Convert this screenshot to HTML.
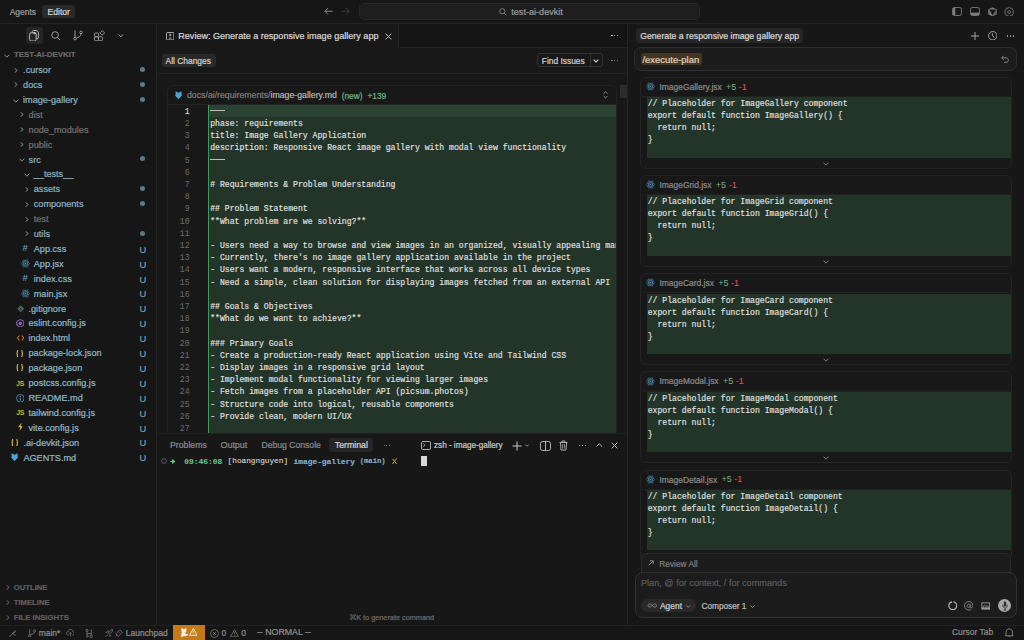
<!DOCTYPE html>
<html><head><meta charset="utf-8"><style>
html,body{margin:0;padding:0;width:1024px;height:640px;overflow:hidden;background:#181818;position:relative}
body *{box-sizing:border-box}
</style></head><body>
<div style="position:absolute;left:0px;top:0px;width:1024px;height:23px;background:#161616;border-radius:0px;box-sizing:border-box;"></div>
<div style="position:absolute;left:0px;top:23px;width:1024px;height:1px;background:#232323;border-radius:0px;box-sizing:border-box;"></div>
<div style="position:absolute;left:9.70px;top:8.25px;font-family:'Liberation Sans', sans-serif;font-weight:400;font-size:8.448px;line-height:8.448px;color:#9d9d9d;white-space:pre;-webkit-text-stroke:0.22px #9d9d9d;">Agents</div>
<div style="position:absolute;left:42px;top:5px;width:33px;height:13.3px;background:#2a2a2a;border-radius:3px;box-sizing:border-box;"></div>
<div style="position:absolute;left:47.50px;top:8.11px;font-family:'Liberation Sans', sans-serif;font-weight:400;font-size:8.613px;line-height:8.613px;color:#d6d6d6;white-space:pre;-webkit-text-stroke:0.22px #d6d6d6;">Editor</div>
<svg style="position:absolute;left:323.5px;top:7.3px;" width="9" height="8.5" viewBox="0 0 9 8.5" fill="none"><path d="M8.6 4.25H0.9M4.1 1L0.9 4.25L4.1 7.5" stroke="#8e8e8e" stroke-width="0.95"/></svg>
<svg style="position:absolute;left:341px;top:7.3px;" width="9" height="8.5" viewBox="0 0 9 8.5" fill="none"><path d="M0.4 4.25H8.1M4.9 1L8.1 4.25L4.9 7.5" stroke="#3c3c3c" stroke-width="0.95"/></svg>
<div style="position:absolute;left:359px;top:3px;width:340.5px;height:16.7px;background:#1e1e1e;border:1px solid #272727;border-radius:5px;box-sizing:border-box;"></div>
<svg style="position:absolute;left:498.8px;top:8.3px;" width="8" height="8" viewBox="0 0 8 8" fill="none"><circle cx="3.3" cy="3.3" r="2.6" stroke="#858585" stroke-width="0.9"/><path d="M5.2 5.2L7.4 7.4" stroke="#858585" stroke-width="0.9"/></svg>
<div style="position:absolute;left:511.25px;top:7.97px;font-family:'Liberation Sans', sans-serif;font-weight:400;font-size:9.129px;line-height:9.129px;color:#9a9a9a;white-space:pre;-webkit-text-stroke:0.22px #9a9a9a;">test-ai-devkit</div>
<svg style="position:absolute;left:952px;top:7px;" width="10" height="9" viewBox="0 0 10 9" fill="none"><rect x="0.5" y="0.5" width="9" height="8" rx="1.8" stroke="#7c7c7c" stroke-width="0.9"/><rect x="0.9" y="0.9" width="2.4" height="7.2" fill="#7c7c7c"/></svg>
<svg style="position:absolute;left:969.8px;top:7px;" width="10" height="9" viewBox="0 0 10 9" fill="none"><rect x="0.5" y="0.5" width="9" height="8" rx="1.8" stroke="#7c7c7c" stroke-width="0.9"/><rect x="0.9" y="5.6" width="8.2" height="2.5" fill="#7c7c7c"/></svg>
<svg style="position:absolute;left:988px;top:6.7px;" width="9" height="9.6" viewBox="0 0 9 9.6" fill="none"><path d="M4.5 0.2L8.8 2.6V7.2L4.5 9.5L0.2 7.2V2.6Z" fill="#7c7c7c"/><path d="M1.2 2.6H8.3L4.5 8.2Z" fill="#161616"/><path d="M8.3 2.6L4.5 8.2V9.4L8.8 7.1V2.6Z" fill="#5c5c5c"/></svg>
<svg style="position:absolute;left:1003.8px;top:6.6px;" width="10.4" height="9.8" viewBox="0 0 10.4 9.8" fill="none"><path d="M5.2 0.7L6.4 1.8L8 1.6L8.3 3.2L9.7 4.1L9.1 5.6L9.7 7L8.3 7.9L8 9.4L6.4 9.2L5.2 10.2L4 9.2L2.4 9.4L2.1 7.9L0.7 7L1.3 5.6L0.7 4.1L2.1 3.2L2.4 1.6L4 1.8Z" stroke="#7c7c7c" stroke-width="0.85" stroke-linejoin="round" transform="translate(0 -0.5)"/><circle cx="5.2" cy="5.1" r="1.5" stroke="#7c7c7c" stroke-width="0.85"/></svg>
<div style="position:absolute;left:0px;top:24px;width:156px;height:601px;background:#161616;border-radius:0px;box-sizing:border-box;"></div>
<div style="position:absolute;left:156px;top:24px;width:1px;height:601px;background:#232323;border-radius:0px;box-sizing:border-box;"></div>
<div style="position:absolute;left:25.5px;top:26.7px;width:17.299999999999997px;height:17.3px;background:#262626;border-radius:3px;box-sizing:border-box;"></div>
<svg style="position:absolute;left:29.3px;top:29.8px;" width="10" height="11.5" viewBox="0 0 10 11.5" fill="none"><path d="M3.2 2.6V2C3.2 1.2 3.8 0.5 4.6 0.5H7C8.3 0.5 9.4 1.6 9.4 2.9V7.4C9.4 8.2 8.8 8.8 8 8.8H7.2" stroke="#cdcdcd" stroke-width="0.85"/><rect x="0.6" y="2.8" width="6.6" height="8.2" rx="1.6" stroke="#cdcdcd" stroke-width="0.85"/><circle cx="5.6" cy="3.2" r="1.1" fill="#cdcdcd"/></svg>
<svg style="position:absolute;left:50.8px;top:31px;" width="10" height="10" viewBox="0 0 10 10" fill="none"><circle cx="4.1" cy="4" r="3.3" stroke="#a8a8a8" stroke-width="0.9"/><path d="M6.5 6.4L9.2 9.1" stroke="#a8a8a8" stroke-width="0.95"/></svg>
<svg style="position:absolute;left:72.8px;top:30.4px;" width="10" height="10.6" viewBox="0 0 10 10.6" fill="none"><path d="M2 0.3V7.6" stroke="#a8a8a8" stroke-width="0.9"/><circle cx="2" cy="8.6" r="1.3" stroke="#a8a8a8" stroke-width="0.85"/><circle cx="8" cy="2.4" r="1.3" stroke="#a8a8a8" stroke-width="0.85"/><path d="M8 3.7C8 6.5 5.5 7.3 3.2 8.2" stroke="#a8a8a8" stroke-width="0.9"/></svg>
<svg style="position:absolute;left:93.6px;top:29.8px;" width="11.4" height="11.2" viewBox="0 0 11.4 11.2" fill="none"><rect x="0.5" y="3.1" width="4" height="3.7" rx="0.9" stroke="#a8a8a8" stroke-width="0.85"/><rect x="0.5" y="6.8" width="4" height="3.9" rx="0.9" stroke="#a8a8a8" stroke-width="0.85"/><rect x="4.5" y="6.8" width="4" height="3.9" rx="0.9" stroke="#a8a8a8" stroke-width="0.85"/><path d="M8.3 0.6L10.6 2.9L8.3 5.2L6 2.9Z" stroke="#a8a8a8" stroke-width="0.85" stroke-linejoin="round"/></svg>
<svg style="position:absolute;left:118px;top:34px;" width="6" height="3.5" viewBox="0 0 6 3.5" fill="none"><path d="M0.4 0.4L2.9 2.8L5.4 0.4" stroke="#a0a0a0" stroke-width="0.9"/></svg>
<svg style="position:absolute;left:4px;top:53.5px;" width="6" height="4" viewBox="0 0 6 4" fill="none"><path d="M0.4 0.6L2.9 3.2L5.4 0.6" stroke="#8e8e8e" stroke-width="1"/></svg>
<div style="position:absolute;left:14.00px;top:51.34px;font-family:'Liberation Sans', sans-serif;font-weight:700;font-size:7.864px;line-height:7.864px;color:#6a6a6a;white-space:pre;-webkit-text-stroke:0.22px #6a6a6a;">TEST-AI-DEVKIT</div>
<svg style="position:absolute;left:14px;top:67.5px;" width="4" height="5" viewBox="0 0 4 5" fill="none"><path d="M0.6 0.4L3.2 2.5L0.6 4.6" stroke="#8e8e8e" stroke-width="1"/></svg>
<div style="position:absolute;left:23.10px;top:66.15px;font-family:'Liberation Sans', sans-serif;font-weight:400;font-size:9.150px;line-height:9.150px;color:#86b3c4;white-space:pre;-webkit-text-stroke:0.22px #86b3c4;">.cursor</div>
<div style="position:absolute;left:139.8px;top:66.9px;width:5px;height:5px;border-radius:50%;background:#5d7884"></div>
<svg style="position:absolute;left:14px;top:82.4px;" width="4" height="5" viewBox="0 0 4 5" fill="none"><path d="M0.6 0.4L3.2 2.5L0.6 4.6" stroke="#8e8e8e" stroke-width="1"/></svg>
<div style="position:absolute;left:23.10px;top:81.05px;font-family:'Liberation Sans', sans-serif;font-weight:400;font-size:9.150px;line-height:9.150px;color:#86b3c4;white-space:pre;-webkit-text-stroke:0.22px #86b3c4;">docs</div>
<div style="position:absolute;left:139.8px;top:81.80000000000001px;width:5px;height:5px;border-radius:50%;background:#5d7884"></div>
<svg style="position:absolute;left:13px;top:98.6px;" width="6" height="4" viewBox="0 0 6 4" fill="none"><path d="M0.4 0.6L2.9 3.2L5.4 0.6" stroke="#8e8e8e" stroke-width="1"/></svg>
<div style="position:absolute;left:23.10px;top:95.95px;font-family:'Liberation Sans', sans-serif;font-weight:400;font-size:9.150px;line-height:9.150px;color:#86b3c4;white-space:pre;-webkit-text-stroke:0.22px #86b3c4;">image-gallery</div>
<div style="position:absolute;left:139.8px;top:96.7px;width:5px;height:5px;border-radius:50%;background:#5d7884"></div>
<svg style="position:absolute;left:20px;top:112.2px;" width="4" height="5" viewBox="0 0 4 5" fill="none"><path d="M0.6 0.4L3.2 2.5L0.6 4.6" stroke="#8e8e8e" stroke-width="1"/></svg>
<div style="position:absolute;left:28.60px;top:110.85px;font-family:'Liberation Sans', sans-serif;font-weight:400;font-size:9.150px;line-height:9.150px;color:#727272;white-space:pre;-webkit-text-stroke:0.22px #727272;">dist</div>
<svg style="position:absolute;left:20px;top:127.1px;" width="4" height="5" viewBox="0 0 4 5" fill="none"><path d="M0.6 0.4L3.2 2.5L0.6 4.6" stroke="#8e8e8e" stroke-width="1"/></svg>
<div style="position:absolute;left:28.60px;top:125.75px;font-family:'Liberation Sans', sans-serif;font-weight:400;font-size:9.150px;line-height:9.150px;color:#727272;white-space:pre;-webkit-text-stroke:0.22px #727272;">node_modules</div>
<svg style="position:absolute;left:20px;top:142.0px;" width="4" height="5" viewBox="0 0 4 5" fill="none"><path d="M0.6 0.4L3.2 2.5L0.6 4.6" stroke="#8e8e8e" stroke-width="1"/></svg>
<div style="position:absolute;left:28.60px;top:140.65px;font-family:'Liberation Sans', sans-serif;font-weight:400;font-size:9.150px;line-height:9.150px;color:#727272;white-space:pre;-webkit-text-stroke:0.22px #727272;">public</div>
<svg style="position:absolute;left:18.7px;top:158.20000000000002px;" width="6" height="4" viewBox="0 0 6 4" fill="none"><path d="M0.4 0.6L2.9 3.2L5.4 0.6" stroke="#8e8e8e" stroke-width="1"/></svg>
<div style="position:absolute;left:28.60px;top:155.55px;font-family:'Liberation Sans', sans-serif;font-weight:400;font-size:9.150px;line-height:9.150px;color:#86b3c4;white-space:pre;-webkit-text-stroke:0.22px #86b3c4;">src</div>
<div style="position:absolute;left:139.8px;top:156.3px;width:5px;height:5px;border-radius:50%;background:#5d7884"></div>
<svg style="position:absolute;left:23.7px;top:173.10000000000002px;" width="6" height="4" viewBox="0 0 6 4" fill="none"><path d="M0.4 0.6L2.9 3.2L5.4 0.6" stroke="#8e8e8e" stroke-width="1"/></svg>
<div style="position:absolute;left:33.75px;top:170.45px;font-family:'Liberation Sans', sans-serif;font-weight:400;font-size:9.150px;line-height:9.150px;color:#86b3c4;white-space:pre;-webkit-text-stroke:0.22px #86b3c4;">__tests__</div>
<svg style="position:absolute;left:25px;top:186.7px;" width="4" height="5" viewBox="0 0 4 5" fill="none"><path d="M0.6 0.4L3.2 2.5L0.6 4.6" stroke="#8e8e8e" stroke-width="1"/></svg>
<div style="position:absolute;left:33.75px;top:185.35px;font-family:'Liberation Sans', sans-serif;font-weight:400;font-size:9.150px;line-height:9.150px;color:#86b3c4;white-space:pre;-webkit-text-stroke:0.22px #86b3c4;">assets</div>
<div style="position:absolute;left:139.8px;top:186.1px;width:5px;height:5px;border-radius:50%;background:#5d7884"></div>
<svg style="position:absolute;left:25px;top:201.6px;" width="4" height="5" viewBox="0 0 4 5" fill="none"><path d="M0.6 0.4L3.2 2.5L0.6 4.6" stroke="#8e8e8e" stroke-width="1"/></svg>
<div style="position:absolute;left:33.75px;top:200.25px;font-family:'Liberation Sans', sans-serif;font-weight:400;font-size:9.150px;line-height:9.150px;color:#86b3c4;white-space:pre;-webkit-text-stroke:0.22px #86b3c4;">components</div>
<div style="position:absolute;left:139.8px;top:201.0px;width:5px;height:5px;border-radius:50%;background:#5d7884"></div>
<svg style="position:absolute;left:25px;top:216.5px;" width="4" height="5" viewBox="0 0 4 5" fill="none"><path d="M0.6 0.4L3.2 2.5L0.6 4.6" stroke="#8e8e8e" stroke-width="1"/></svg>
<div style="position:absolute;left:33.75px;top:215.15px;font-family:'Liberation Sans', sans-serif;font-weight:400;font-size:9.150px;line-height:9.150px;color:#727272;white-space:pre;-webkit-text-stroke:0.22px #727272;">test</div>
<svg style="position:absolute;left:25px;top:231.4px;" width="4" height="5" viewBox="0 0 4 5" fill="none"><path d="M0.6 0.4L3.2 2.5L0.6 4.6" stroke="#8e8e8e" stroke-width="1"/></svg>
<div style="position:absolute;left:33.75px;top:230.05px;font-family:'Liberation Sans', sans-serif;font-weight:400;font-size:9.150px;line-height:9.150px;color:#86b3c4;white-space:pre;-webkit-text-stroke:0.22px #86b3c4;">utils</div>
<div style="position:absolute;left:139.8px;top:230.8px;width:5px;height:5px;border-radius:50%;background:#5d7884"></div>
<div style="position:absolute;left:20.6px;top:243.20000000000002px;width:9px;height:10px;font:700 9.6px 'Liberation Sans', sans-serif;color:#4a9cc8;line-height:10px;text-align:center">#</div>
<div style="position:absolute;left:33.75px;top:244.95px;font-family:'Liberation Sans', sans-serif;font-weight:400;font-size:9.150px;line-height:9.150px;color:#8fb6c6;white-space:pre;-webkit-text-stroke:0.22px #8fb6c6;">App.css</div>
<div style="position:absolute;left:139.60px;top:244.74px;font-family:'Liberation Sans', sans-serif;font-weight:400;font-size:9.400px;line-height:9.400px;color:#76a0b1;white-space:pre;-webkit-text-stroke:0.22px #76a0b1;">U</div>
<svg style="position:absolute;left:20.8px;top:259.1px;" width="9" height="9" viewBox="0 0 9 9" fill="none"><g stroke="#4f91b3" stroke-width="0.55"><ellipse cx="4.5" cy="4.5" rx="4.1" ry="1.7"/><ellipse cx="4.5" cy="4.5" rx="4.1" ry="1.7" transform="rotate(60 4.5 4.5)"/><ellipse cx="4.5" cy="4.5" rx="4.1" ry="1.7" transform="rotate(120 4.5 4.5)"/></g><circle cx="4.5" cy="4.5" r="0.7" fill="#4f91b3"/></svg>
<div style="position:absolute;left:33.75px;top:259.85px;font-family:'Liberation Sans', sans-serif;font-weight:400;font-size:9.150px;line-height:9.150px;color:#8fb6c6;white-space:pre;-webkit-text-stroke:0.22px #8fb6c6;">App.jsx</div>
<div style="position:absolute;left:139.60px;top:259.64px;font-family:'Liberation Sans', sans-serif;font-weight:400;font-size:9.400px;line-height:9.400px;color:#76a0b1;white-space:pre;-webkit-text-stroke:0.22px #76a0b1;">U</div>
<div style="position:absolute;left:20.6px;top:273.0px;width:9px;height:10px;font:700 9.6px 'Liberation Sans', sans-serif;color:#4a9cc8;line-height:10px;text-align:center">#</div>
<div style="position:absolute;left:33.75px;top:274.75px;font-family:'Liberation Sans', sans-serif;font-weight:400;font-size:9.150px;line-height:9.150px;color:#8fb6c6;white-space:pre;-webkit-text-stroke:0.22px #8fb6c6;">index.css</div>
<div style="position:absolute;left:139.60px;top:274.54px;font-family:'Liberation Sans', sans-serif;font-weight:400;font-size:9.400px;line-height:9.400px;color:#76a0b1;white-space:pre;-webkit-text-stroke:0.22px #76a0b1;">U</div>
<svg style="position:absolute;left:20.8px;top:288.9px;" width="9" height="9" viewBox="0 0 9 9" fill="none"><g stroke="#4f91b3" stroke-width="0.55"><ellipse cx="4.5" cy="4.5" rx="4.1" ry="1.7"/><ellipse cx="4.5" cy="4.5" rx="4.1" ry="1.7" transform="rotate(60 4.5 4.5)"/><ellipse cx="4.5" cy="4.5" rx="4.1" ry="1.7" transform="rotate(120 4.5 4.5)"/></g><circle cx="4.5" cy="4.5" r="0.7" fill="#4f91b3"/></svg>
<div style="position:absolute;left:33.75px;top:289.65px;font-family:'Liberation Sans', sans-serif;font-weight:400;font-size:9.150px;line-height:9.150px;color:#8fb6c6;white-space:pre;-webkit-text-stroke:0.22px #8fb6c6;">main.jsx</div>
<div style="position:absolute;left:139.60px;top:289.44px;font-family:'Liberation Sans', sans-serif;font-weight:400;font-size:9.400px;line-height:9.400px;color:#76a0b1;white-space:pre;-webkit-text-stroke:0.22px #76a0b1;">U</div>
<svg style="position:absolute;left:16.5px;top:304.79999999999995px;" width="7.5" height="7.5" viewBox="0 0 7.5 7.5" fill="none"><path d="M3.75 0.2L7.3 3.75L3.75 7.3L0.2 3.75Z" fill="#4c5f63"/><path d="M2.6 2.6L4.8 4.8M3.7 3.7V5.3" stroke="#1a1a1a" stroke-width="0.6"/></svg>
<div style="position:absolute;left:28.50px;top:304.55px;font-family:'Liberation Sans', sans-serif;font-weight:400;font-size:9.150px;line-height:9.150px;color:#8fb6c6;white-space:pre;-webkit-text-stroke:0.22px #8fb6c6;">.gitignore</div>
<div style="position:absolute;left:139.60px;top:304.34px;font-family:'Liberation Sans', sans-serif;font-weight:400;font-size:9.400px;line-height:9.400px;color:#76a0b1;white-space:pre;-webkit-text-stroke:0.22px #76a0b1;">U</div>
<svg style="position:absolute;left:15.899999999999999px;top:318.90000000000003px;" width="8.6" height="8.6" viewBox="0 0 8.6 8.6" fill="none"><path d="M4.3 0.5L7.8 2.4V6.2L4.3 8.1L0.8 6.2V2.4Z" stroke="#9b6bd0" stroke-width="1"/><circle cx="4.3" cy="4.3" r="1.6" fill="#9b6bd0"/></svg>
<div style="position:absolute;left:28.50px;top:319.45px;font-family:'Liberation Sans', sans-serif;font-weight:400;font-size:9.150px;line-height:9.150px;color:#8fb6c6;white-space:pre;-webkit-text-stroke:0.22px #8fb6c6;">eslint.config.js</div>
<div style="position:absolute;left:139.60px;top:319.24px;font-family:'Liberation Sans', sans-serif;font-weight:400;font-size:9.400px;line-height:9.400px;color:#76a0b1;white-space:pre;-webkit-text-stroke:0.22px #76a0b1;">U</div>
<svg style="position:absolute;left:16.599999999999998px;top:335.2px;" width="7.2" height="6" viewBox="0 0 7.2 6" fill="none"><path d="M2.4 0.5L0.5 3L2.4 5.5M4.8 0.5L6.7 3L4.8 5.5" stroke="#d8732f" stroke-width="1.05"/></svg>
<div style="position:absolute;left:28.50px;top:334.35px;font-family:'Liberation Sans', sans-serif;font-weight:400;font-size:9.150px;line-height:9.150px;color:#8fb6c6;white-space:pre;-webkit-text-stroke:0.22px #8fb6c6;">index.html</div>
<div style="position:absolute;left:139.60px;top:334.14px;font-family:'Liberation Sans', sans-serif;font-weight:400;font-size:9.400px;line-height:9.400px;color:#76a0b1;white-space:pre;-webkit-text-stroke:0.22px #76a0b1;">U</div>
<svg style="position:absolute;left:16.4px;top:349.5px;" width="7.5" height="7.2" viewBox="0 0 7.5 7.2" fill="none"><path d="M2.2 0.5C1.3 0.5 1.3 1 1.3 1.8V2.9C1.3 3.4 1 3.6 0.5 3.6C1 3.6 1.3 3.8 1.3 4.3V5.4C1.3 6.2 1.3 6.7 2.2 6.7M5.3 0.5C6.2 0.5 6.2 1 6.2 1.8V2.9C6.2 3.4 6.5 3.6 7 3.6C6.5 3.6 6.2 3.8 6.2 4.3V5.4C6.2 6.2 6.2 6.7 5.3 6.7" stroke="#d2bf3a" stroke-width="1.1"/></svg>
<div style="position:absolute;left:28.50px;top:349.25px;font-family:'Liberation Sans', sans-serif;font-weight:400;font-size:9.150px;line-height:9.150px;color:#8fb6c6;white-space:pre;-webkit-text-stroke:0.22px #8fb6c6;">package-lock.json</div>
<div style="position:absolute;left:139.60px;top:349.04px;font-family:'Liberation Sans', sans-serif;font-weight:400;font-size:9.400px;line-height:9.400px;color:#76a0b1;white-space:pre;-webkit-text-stroke:0.22px #76a0b1;">U</div>
<svg style="position:absolute;left:16.4px;top:364.4px;" width="7.5" height="7.2" viewBox="0 0 7.5 7.2" fill="none"><path d="M2.2 0.5C1.3 0.5 1.3 1 1.3 1.8V2.9C1.3 3.4 1 3.6 0.5 3.6C1 3.6 1.3 3.8 1.3 4.3V5.4C1.3 6.2 1.3 6.7 2.2 6.7M5.3 0.5C6.2 0.5 6.2 1 6.2 1.8V2.9C6.2 3.4 6.5 3.6 7 3.6C6.5 3.6 6.2 3.8 6.2 4.3V5.4C6.2 6.2 6.2 6.7 5.3 6.7" stroke="#d2bf3a" stroke-width="1.1"/></svg>
<div style="position:absolute;left:28.50px;top:364.15px;font-family:'Liberation Sans', sans-serif;font-weight:400;font-size:9.150px;line-height:9.150px;color:#8fb6c6;white-space:pre;-webkit-text-stroke:0.22px #8fb6c6;">package.json</div>
<div style="position:absolute;left:139.60px;top:363.94px;font-family:'Liberation Sans', sans-serif;font-weight:400;font-size:9.400px;line-height:9.400px;color:#76a0b1;white-space:pre;-webkit-text-stroke:0.22px #76a0b1;">U</div>
<div style="position:absolute;left:15.7px;top:378.50000000000006px;width:9px;height:9px;font:700 6.8px 'Liberation Sans', sans-serif;color:#cbb530;line-height:9px;text-align:center;letter-spacing:-0.2px">JS</div>
<div style="position:absolute;left:28.50px;top:379.05px;font-family:'Liberation Sans', sans-serif;font-weight:400;font-size:9.150px;line-height:9.150px;color:#8fb6c6;white-space:pre;-webkit-text-stroke:0.22px #8fb6c6;">postcss.config.js</div>
<div style="position:absolute;left:139.60px;top:378.84px;font-family:'Liberation Sans', sans-serif;font-weight:400;font-size:9.400px;line-height:9.400px;color:#76a0b1;white-space:pre;-webkit-text-stroke:0.22px #76a0b1;">U</div>
<svg style="position:absolute;left:15.799999999999999px;top:393.6px;" width="8.6" height="8.6" viewBox="0 0 8.6 8.6" fill="none"><circle cx="4.3" cy="4.3" r="3.8" stroke="#4a8fb8" stroke-width="0.9"/><path d="M4.3 3.7V6.6" stroke="#4a8fb8" stroke-width="1.1"/><circle cx="4.3" cy="2.4" r="0.65" fill="#4a8fb8"/></svg>
<div style="position:absolute;left:28.50px;top:393.95px;font-family:'Liberation Sans', sans-serif;font-weight:400;font-size:9.150px;line-height:9.150px;color:#8fb6c6;white-space:pre;-webkit-text-stroke:0.22px #8fb6c6;">README.md</div>
<div style="position:absolute;left:139.60px;top:393.74px;font-family:'Liberation Sans', sans-serif;font-weight:400;font-size:9.400px;line-height:9.400px;color:#76a0b1;white-space:pre;-webkit-text-stroke:0.22px #76a0b1;">U</div>
<div style="position:absolute;left:15.7px;top:408.3px;width:9px;height:9px;font:700 6.8px 'Liberation Sans', sans-serif;color:#cbb530;line-height:9px;text-align:center;letter-spacing:-0.2px">JS</div>
<div style="position:absolute;left:28.50px;top:408.85px;font-family:'Liberation Sans', sans-serif;font-weight:400;font-size:9.150px;line-height:9.150px;color:#8fb6c6;white-space:pre;-webkit-text-stroke:0.22px #8fb6c6;">tailwind.config.js</div>
<div style="position:absolute;left:139.60px;top:408.64px;font-family:'Liberation Sans', sans-serif;font-weight:400;font-size:9.400px;line-height:9.400px;color:#76a0b1;white-space:pre;-webkit-text-stroke:0.22px #76a0b1;">U</div>
<svg style="position:absolute;left:18.4px;top:423.40000000000003px;" width="5" height="8" viewBox="0 0 5 8" fill="none"><path d="M3.2 0.1L0.4 4.3H2.3L1.5 7.9L4.6 3.3H2.6L3.6 0.1Z" fill="#e0c530"/></svg>
<div style="position:absolute;left:28.50px;top:423.75px;font-family:'Liberation Sans', sans-serif;font-weight:400;font-size:9.150px;line-height:9.150px;color:#8fb6c6;white-space:pre;-webkit-text-stroke:0.22px #8fb6c6;">vite.config.js</div>
<div style="position:absolute;left:139.60px;top:423.54px;font-family:'Liberation Sans', sans-serif;font-weight:400;font-size:9.400px;line-height:9.400px;color:#76a0b1;white-space:pre;-webkit-text-stroke:0.22px #76a0b1;">U</div>
<svg style="position:absolute;left:10.799999999999999px;top:438.9px;" width="7.5" height="7.2" viewBox="0 0 7.5 7.2" fill="none"><path d="M2.2 0.5C1.3 0.5 1.3 1 1.3 1.8V2.9C1.3 3.4 1 3.6 0.5 3.6C1 3.6 1.3 3.8 1.3 4.3V5.4C1.3 6.2 1.3 6.7 2.2 6.7M5.3 0.5C6.2 0.5 6.2 1 6.2 1.8V2.9C6.2 3.4 6.5 3.6 7 3.6C6.5 3.6 6.2 3.8 6.2 4.3V5.4C6.2 6.2 6.2 6.7 5.3 6.7" stroke="#d2bf3a" stroke-width="1.1"/></svg>
<div style="position:absolute;left:23.40px;top:438.65px;font-family:'Liberation Sans', sans-serif;font-weight:400;font-size:9.150px;line-height:9.150px;color:#8fb6c6;white-space:pre;-webkit-text-stroke:0.22px #8fb6c6;">.ai-devkit.json</div>
<div style="position:absolute;left:139.60px;top:438.44px;font-family:'Liberation Sans', sans-serif;font-weight:400;font-size:9.400px;line-height:9.400px;color:#76a0b1;white-space:pre;-webkit-text-stroke:0.22px #76a0b1;">U</div>
<svg style="position:absolute;left:11.0px;top:453.1px;" width="7.2" height="8.4" viewBox="0 0 7.2 8.4" fill="none"><path d="M0.6 0.3L3.6 1.8L6.6 0.3V3.8L7.2 4.4L3.6 8.2L0 4.4L0.6 3.8Z" fill="#4aa3d0"/></svg>
<div style="position:absolute;left:23.40px;top:453.55px;font-family:'Liberation Sans', sans-serif;font-weight:400;font-size:9.150px;line-height:9.150px;color:#8fb6c6;white-space:pre;-webkit-text-stroke:0.22px #8fb6c6;">AGENTS.md</div>
<div style="position:absolute;left:139.60px;top:453.34px;font-family:'Liberation Sans', sans-serif;font-weight:400;font-size:9.400px;line-height:9.400px;color:#76a0b1;white-space:pre;-webkit-text-stroke:0.22px #76a0b1;">U</div>
<svg style="position:absolute;left:6px;top:585.1px;" width="4" height="5" viewBox="0 0 4 5" fill="none"><path d="M0.6 0.4L3.2 2.5L0.6 4.6" stroke="#6a6a6a" stroke-width="1"/></svg>
<div style="position:absolute;left:13.75px;top:584.18px;font-family:'Liberation Sans', sans-serif;font-weight:700;font-size:7.700px;line-height:7.700px;color:#5e5e5e;white-space:pre;-webkit-text-stroke:0.22px #5e5e5e;">OUTLINE</div>
<svg style="position:absolute;left:6px;top:600.0px;" width="4" height="5" viewBox="0 0 4 5" fill="none"><path d="M0.6 0.4L3.2 2.5L0.6 4.6" stroke="#6a6a6a" stroke-width="1"/></svg>
<div style="position:absolute;left:13.75px;top:599.08px;font-family:'Liberation Sans', sans-serif;font-weight:700;font-size:7.700px;line-height:7.700px;color:#5e5e5e;white-space:pre;-webkit-text-stroke:0.22px #5e5e5e;">TIMELINE</div>
<svg style="position:absolute;left:6px;top:614.9px;" width="4" height="5" viewBox="0 0 4 5" fill="none"><path d="M0.6 0.4L3.2 2.5L0.6 4.6" stroke="#6a6a6a" stroke-width="1"/></svg>
<div style="position:absolute;left:13.75px;top:613.98px;font-family:'Liberation Sans', sans-serif;font-weight:700;font-size:7.700px;line-height:7.700px;color:#5e5e5e;white-space:pre;-webkit-text-stroke:0.22px #5e5e5e;">FILE INSIGHTS</div>
<div style="position:absolute;left:157px;top:24px;width:471px;height:409px;background:#181818;border-radius:0px;box-sizing:border-box;"></div>
<div style="position:absolute;left:398px;top:24px;width:230px;height:23px;background:#141414;border-radius:0px;box-sizing:border-box;"></div>
<div style="position:absolute;left:398px;top:24px;width:1px;height:23px;background:#232323;border-radius:0px;box-sizing:border-box;"></div>
<div style="position:absolute;left:399px;top:46.5px;width:229px;height:1.0px;background:#232323;border-radius:0px;box-sizing:border-box;"></div>
<svg style="position:absolute;left:165.8px;top:31.5px;" width="8.4" height="8.4" viewBox="0 0 8.4 8.4" fill="none"><rect x="0.45" y="0.45" width="7.5" height="7.5" rx="1.3" stroke="#c4c4c4" stroke-width="0.9"/><path d="M4.2 1.7V4.3M2.9 3H5.5M2.9 6.1H5.5" stroke="#c4c4c4" stroke-width="0.85"/></svg>
<div style="position:absolute;left:178.30px;top:31.98px;font-family:'Liberation Sans', sans-serif;font-weight:400;font-size:9.063px;line-height:9.063px;color:#d8d8d8;white-space:pre;-webkit-text-stroke:0.22px #d8d8d8;">Review: Generate a responsive image gallery app</div>
<svg style="position:absolute;left:385.3px;top:32.5px;" width="7" height="7" viewBox="0 0 7 7" fill="none"><path d="M0.6 0.6L6.4 6.4M6.4 0.6L0.6 6.4" stroke="#cfcfcf" stroke-width="0.9"/></svg>
<div style="position:absolute;left:157px;top:73px;width:471px;height:1px;background:#232323;border-radius:0px;box-sizing:border-box;"></div>
<div style="position:absolute;left:162px;top:53.7px;width:53.599999999999994px;height:13.299999999999997px;background:#292929;border-radius:3px;box-sizing:border-box;"></div>
<div style="position:absolute;left:165.60px;top:57.37px;font-family:'Liberation Sans', sans-serif;font-weight:400;font-size:8.420px;line-height:8.420px;color:#d0d0d0;white-space:pre;-webkit-text-stroke:0.22px #d0d0d0;">All Changes</div>
<div style="position:absolute;left:537px;top:53px;width:65.70000000000005px;height:13.799999999999997px;background:#181818;border:1px solid #333333;border-radius:3px;box-sizing:border-box;"></div>
<div style="position:absolute;left:589.5px;top:53px;width:1.0px;height:13.799999999999997px;background:#333333;border-radius:0px;box-sizing:border-box;"></div>
<div style="position:absolute;left:541.80px;top:56.98px;font-family:'Liberation Sans', sans-serif;font-weight:400;font-size:8.409px;line-height:8.409px;color:#d0d0d0;white-space:pre;-webkit-text-stroke:0.22px #d0d0d0;">Find Issues</div>
<svg style="position:absolute;left:593px;top:58.6px;" width="6" height="4" viewBox="0 0 6 4" fill="none"><path d="M0.6 0.6L3 2.9L5.4 0.6" stroke="#d0d0d0" stroke-width="1.1"/></svg>
<div style="position:absolute;left:611.3px;top:59.5px;width:1.4px;height:1.4px;border-radius:50%;background:#8a8a8a"></div>
<div style="position:absolute;left:611.0px;top:34.9px;width:1.6px;height:1.6px;border-radius:50%;background:#c8c8c8"></div>
<div style="position:absolute;left:614.0999999999999px;top:59.5px;width:1.4px;height:1.4px;border-radius:50%;background:#8a8a8a"></div>
<div style="position:absolute;left:613.9px;top:34.9px;width:1.6px;height:1.6px;border-radius:50%;background:#c8c8c8"></div>
<div style="position:absolute;left:616.9px;top:59.5px;width:1.4px;height:1.4px;border-radius:50%;background:#8a8a8a"></div>
<div style="position:absolute;left:616.8px;top:34.9px;width:1.6px;height:1.6px;border-radius:50%;background:#c8c8c8"></div>
<div style="position:absolute;left:167px;top:84.6px;width:450px;height:355.4px;background:#181818;border:1px solid #232323;border-radius:6px;box-sizing:border-box;"></div>
<div style="position:absolute;left:168px;top:103.6px;width:448px;height:1.0px;background:#232323;border-radius:0px;box-sizing:border-box;"></div>
<svg style="position:absolute;left:175px;top:90.5px;" width="7.4" height="8.4" viewBox="0 0 7.4 8.4" fill="none"><path d="M0.6 0.3L3.6 1.8L6.6 0.3V3.8L7.2 4.4L3.6 8.2L0 4.4L0.6 3.8Z" fill="#4aa3d0"/></svg>
<div style="position:absolute;left:187.00px;top:91.40px;font-family:'Liberation Sans', sans-serif;font-weight:400;font-size:8.744px;line-height:8.744px;color:#7d7d7d;white-space:pre;-webkit-text-stroke:0.22px #7d7d7d;">docs/ai/requirements/<span style="color:#dcdcdc">image-gallery.md</span></div>
<div style="position:absolute;left:341.75px;top:91.78px;font-family:'Liberation Sans', sans-serif;font-weight:400;font-size:8.298px;line-height:8.298px;color:#6cb585;white-space:pre;-webkit-text-stroke:0.22px #6cb585;">(new)</div>
<div style="position:absolute;left:367.50px;top:91.75px;font-family:'Liberation Sans', sans-serif;font-weight:400;font-size:8.324px;line-height:8.324px;color:#6cb585;white-space:pre;-webkit-text-stroke:0.22px #6cb585;">+139</div>
<svg style="position:absolute;left:602.8px;top:90.6px;" width="5" height="8" viewBox="0 0 5 8" fill="none"><path d="M0.6 2.7L2.5 0.8L4.4 2.7M0.6 5L2.5 6.9L4.4 5" stroke="#a0a0a0" stroke-width="0.85"/></svg>
<div style="position:absolute;left:620px;top:85px;width:7.2999999999999545px;height:13px;background:#2c2c2c;border-radius:0px;box-sizing:border-box;"></div>
<div style="position:absolute;left:208px;top:104.9px;width:1px;height:328.1px;background:#3f9a5c;border-radius:0px;box-sizing:border-box;"></div>
<div style="position:absolute;left:209px;top:104.9px;width:407.29999999999995px;height:328.1px;background:#233429;border-radius:0px;box-sizing:border-box;"></div>
<div style="position:absolute;left:209px;top:104.9px;width:407.29999999999995px;height:12.0px;background:#2c4334;border-radius:0px;box-sizing:border-box;"></div>
<div style="position:absolute;left:209px;top:104.9px;width:407.3px;height:328px;overflow:hidden">
<div style="position:absolute;left:1.3px;top:5.5px;width:14.4px;height:1px;background:#bdbdbd"></div>
<div style="position:absolute;left:1.2px;top:14.1px;height:12.2px;line-height:12.2px;font:8.15px 'Liberation Mono', monospace;color:#e2e2e2;white-space:pre;-webkit-text-stroke:0.15px #e2e2e2">phase: requirements</div>
<div style="position:absolute;left:1.2px;top:26.299999999999997px;height:12.2px;line-height:12.2px;font:8.15px 'Liberation Mono', monospace;color:#e2e2e2;white-space:pre;-webkit-text-stroke:0.15px #e2e2e2">title: Image Gallery Application</div>
<div style="position:absolute;left:1.2px;top:38.49999999999999px;height:12.2px;line-height:12.2px;font:8.15px 'Liberation Mono', monospace;color:#e2e2e2;white-space:pre;-webkit-text-stroke:0.15px #e2e2e2">description: Responsive React image gallery with modal view functionality</div>
<div style="position:absolute;left:1.3px;top:54.3px;width:14.4px;height:1px;background:#bdbdbd"></div>
<div style="position:absolute;left:1.2px;top:62.9px;height:12.2px;line-height:12.2px;font:8.15px 'Liberation Mono', monospace;color:#e2e2e2;white-space:pre;-webkit-text-stroke:0.15px #e2e2e2"></div>
<div style="position:absolute;left:1.2px;top:75.1px;height:12.2px;line-height:12.2px;font:8.15px 'Liberation Mono', monospace;color:#e2e2e2;white-space:pre;-webkit-text-stroke:0.15px #e2e2e2"># Requirements &amp; Problem Understanding</div>
<div style="position:absolute;left:1.2px;top:87.3px;height:12.2px;line-height:12.2px;font:8.15px 'Liberation Mono', monospace;color:#e2e2e2;white-space:pre;-webkit-text-stroke:0.15px #e2e2e2"></div>
<div style="position:absolute;left:1.2px;top:99.5px;height:12.2px;line-height:12.2px;font:8.15px 'Liberation Mono', monospace;color:#e2e2e2;white-space:pre;-webkit-text-stroke:0.15px #e2e2e2">## Problem Statement</div>
<div style="position:absolute;left:1.2px;top:111.7px;height:12.2px;line-height:12.2px;font:8.15px 'Liberation Mono', monospace;color:#e2e2e2;white-space:pre;-webkit-text-stroke:0.15px #e2e2e2">**What problem are we solving?**</div>
<div style="position:absolute;left:1.2px;top:123.9px;height:12.2px;line-height:12.2px;font:8.15px 'Liberation Mono', monospace;color:#e2e2e2;white-space:pre;-webkit-text-stroke:0.15px #e2e2e2"></div>
<div style="position:absolute;left:1.2px;top:136.1px;height:12.2px;line-height:12.2px;font:8.15px 'Liberation Mono', monospace;color:#e2e2e2;white-space:pre;-webkit-text-stroke:0.15px #e2e2e2">- Users need a way to browse and view images in an organized, visually appealing manner</div>
<div style="position:absolute;left:1.2px;top:148.29999999999998px;height:12.2px;line-height:12.2px;font:8.15px 'Liberation Mono', monospace;color:#e2e2e2;white-space:pre;-webkit-text-stroke:0.15px #e2e2e2">- Currently, there&#x27;s no image gallery application available in the project</div>
<div style="position:absolute;left:1.2px;top:160.5px;height:12.2px;line-height:12.2px;font:8.15px 'Liberation Mono', monospace;color:#e2e2e2;white-space:pre;-webkit-text-stroke:0.15px #e2e2e2">- Users want a modern, responsive interface that works across all device types</div>
<div style="position:absolute;left:1.2px;top:172.7px;height:12.2px;line-height:12.2px;font:8.15px 'Liberation Mono', monospace;color:#e2e2e2;white-space:pre;-webkit-text-stroke:0.15px #e2e2e2">- Need a simple, clean solution for displaying images fetched from an external API</div>
<div style="position:absolute;left:1.2px;top:184.9px;height:12.2px;line-height:12.2px;font:8.15px 'Liberation Mono', monospace;color:#e2e2e2;white-space:pre;-webkit-text-stroke:0.15px #e2e2e2"></div>
<div style="position:absolute;left:1.2px;top:197.1px;height:12.2px;line-height:12.2px;font:8.15px 'Liberation Mono', monospace;color:#e2e2e2;white-space:pre;-webkit-text-stroke:0.15px #e2e2e2">## Goals &amp; Objectives</div>
<div style="position:absolute;left:1.2px;top:209.29999999999998px;height:12.2px;line-height:12.2px;font:8.15px 'Liberation Mono', monospace;color:#e2e2e2;white-space:pre;-webkit-text-stroke:0.15px #e2e2e2">**What do we want to achieve?**</div>
<div style="position:absolute;left:1.2px;top:221.5px;height:12.2px;line-height:12.2px;font:8.15px 'Liberation Mono', monospace;color:#e2e2e2;white-space:pre;-webkit-text-stroke:0.15px #e2e2e2"></div>
<div style="position:absolute;left:1.2px;top:233.7px;height:12.2px;line-height:12.2px;font:8.15px 'Liberation Mono', monospace;color:#e2e2e2;white-space:pre;-webkit-text-stroke:0.15px #e2e2e2">### Primary Goals</div>
<div style="position:absolute;left:1.2px;top:245.9px;height:12.2px;line-height:12.2px;font:8.15px 'Liberation Mono', monospace;color:#e2e2e2;white-space:pre;-webkit-text-stroke:0.15px #e2e2e2">- Create a production-ready React application using Vite and Tailwind CSS</div>
<div style="position:absolute;left:1.2px;top:258.09999999999997px;height:12.2px;line-height:12.2px;font:8.15px 'Liberation Mono', monospace;color:#e2e2e2;white-space:pre;-webkit-text-stroke:0.15px #e2e2e2">- Display images in a responsive grid layout</div>
<div style="position:absolute;left:1.2px;top:270.29999999999995px;height:12.2px;line-height:12.2px;font:8.15px 'Liberation Mono', monospace;color:#e2e2e2;white-space:pre;-webkit-text-stroke:0.15px #e2e2e2">- Implement modal functionality for viewing larger images</div>
<div style="position:absolute;left:1.2px;top:282.49999999999994px;height:12.2px;line-height:12.2px;font:8.15px 'Liberation Mono', monospace;color:#e2e2e2;white-space:pre;-webkit-text-stroke:0.15px #e2e2e2">- Fetch images from a placeholder API (picsum.photos)</div>
<div style="position:absolute;left:1.2px;top:294.69999999999993px;height:12.2px;line-height:12.2px;font:8.15px 'Liberation Mono', monospace;color:#e2e2e2;white-space:pre;-webkit-text-stroke:0.15px #e2e2e2">- Structure code into logical, reusable components</div>
<div style="position:absolute;left:1.2px;top:306.9px;height:12.2px;line-height:12.2px;font:8.15px 'Liberation Mono', monospace;color:#e2e2e2;white-space:pre;-webkit-text-stroke:0.15px #e2e2e2">- Provide clean, modern UI/UX</div>
<div style="position:absolute;left:1.2px;top:319.09999999999997px;height:12.2px;line-height:12.2px;font:8.15px 'Liberation Mono', monospace;color:#e2e2e2;white-space:pre;-webkit-text-stroke:0.15px #e2e2e2"></div>
</div>
<div style="position:absolute;left:169px;width:20.6px;text-align:right;top:106.80000000000001px;height:12.2px;line-height:12.2px;font:8.15px 'Liberation Mono', monospace;color:#e6e6e6">1</div>
<div style="position:absolute;left:169px;width:20.6px;text-align:right;top:119.00000000000001px;height:12.2px;line-height:12.2px;font:8.15px 'Liberation Mono', monospace;color:#6c6c6c">2</div>
<div style="position:absolute;left:169px;width:20.6px;text-align:right;top:131.20000000000002px;height:12.2px;line-height:12.2px;font:8.15px 'Liberation Mono', monospace;color:#6c6c6c">3</div>
<div style="position:absolute;left:169px;width:20.6px;text-align:right;top:143.4px;height:12.2px;line-height:12.2px;font:8.15px 'Liberation Mono', monospace;color:#6c6c6c">4</div>
<div style="position:absolute;left:169px;width:20.6px;text-align:right;top:155.6px;height:12.2px;line-height:12.2px;font:8.15px 'Liberation Mono', monospace;color:#6c6c6c">5</div>
<div style="position:absolute;left:169px;width:20.6px;text-align:right;top:167.8px;height:12.2px;line-height:12.2px;font:8.15px 'Liberation Mono', monospace;color:#6c6c6c">6</div>
<div style="position:absolute;left:169px;width:20.6px;text-align:right;top:180.0px;height:12.2px;line-height:12.2px;font:8.15px 'Liberation Mono', monospace;color:#6c6c6c">7</div>
<div style="position:absolute;left:169px;width:20.6px;text-align:right;top:192.20000000000002px;height:12.2px;line-height:12.2px;font:8.15px 'Liberation Mono', monospace;color:#6c6c6c">8</div>
<div style="position:absolute;left:169px;width:20.6px;text-align:right;top:204.4px;height:12.2px;line-height:12.2px;font:8.15px 'Liberation Mono', monospace;color:#6c6c6c">9</div>
<div style="position:absolute;left:169px;width:20.6px;text-align:right;top:216.6px;height:12.2px;line-height:12.2px;font:8.15px 'Liberation Mono', monospace;color:#6c6c6c">10</div>
<div style="position:absolute;left:169px;width:20.6px;text-align:right;top:228.8px;height:12.2px;line-height:12.2px;font:8.15px 'Liberation Mono', monospace;color:#6c6c6c">11</div>
<div style="position:absolute;left:169px;width:20.6px;text-align:right;top:241.0px;height:12.2px;line-height:12.2px;font:8.15px 'Liberation Mono', monospace;color:#6c6c6c">12</div>
<div style="position:absolute;left:169px;width:20.6px;text-align:right;top:253.2px;height:12.2px;line-height:12.2px;font:8.15px 'Liberation Mono', monospace;color:#6c6c6c">13</div>
<div style="position:absolute;left:169px;width:20.6px;text-align:right;top:265.4px;height:12.2px;line-height:12.2px;font:8.15px 'Liberation Mono', monospace;color:#6c6c6c">14</div>
<div style="position:absolute;left:169px;width:20.6px;text-align:right;top:277.59999999999997px;height:12.2px;line-height:12.2px;font:8.15px 'Liberation Mono', monospace;color:#6c6c6c">15</div>
<div style="position:absolute;left:169px;width:20.6px;text-align:right;top:289.79999999999995px;height:12.2px;line-height:12.2px;font:8.15px 'Liberation Mono', monospace;color:#6c6c6c">16</div>
<div style="position:absolute;left:169px;width:20.6px;text-align:right;top:302.0px;height:12.2px;line-height:12.2px;font:8.15px 'Liberation Mono', monospace;color:#6c6c6c">17</div>
<div style="position:absolute;left:169px;width:20.6px;text-align:right;top:314.19999999999993px;height:12.2px;line-height:12.2px;font:8.15px 'Liberation Mono', monospace;color:#6c6c6c">18</div>
<div style="position:absolute;left:169px;width:20.6px;text-align:right;top:326.4px;height:12.2px;line-height:12.2px;font:8.15px 'Liberation Mono', monospace;color:#6c6c6c">19</div>
<div style="position:absolute;left:169px;width:20.6px;text-align:right;top:338.59999999999997px;height:12.2px;line-height:12.2px;font:8.15px 'Liberation Mono', monospace;color:#6c6c6c">20</div>
<div style="position:absolute;left:169px;width:20.6px;text-align:right;top:350.79999999999995px;height:12.2px;line-height:12.2px;font:8.15px 'Liberation Mono', monospace;color:#6c6c6c">21</div>
<div style="position:absolute;left:169px;width:20.6px;text-align:right;top:363.0px;height:12.2px;line-height:12.2px;font:8.15px 'Liberation Mono', monospace;color:#6c6c6c">22</div>
<div style="position:absolute;left:169px;width:20.6px;text-align:right;top:375.19999999999993px;height:12.2px;line-height:12.2px;font:8.15px 'Liberation Mono', monospace;color:#6c6c6c">23</div>
<div style="position:absolute;left:169px;width:20.6px;text-align:right;top:387.4px;height:12.2px;line-height:12.2px;font:8.15px 'Liberation Mono', monospace;color:#6c6c6c">24</div>
<div style="position:absolute;left:169px;width:20.6px;text-align:right;top:399.5999999999999px;height:12.2px;line-height:12.2px;font:8.15px 'Liberation Mono', monospace;color:#6c6c6c">25</div>
<div style="position:absolute;left:169px;width:20.6px;text-align:right;top:411.79999999999995px;height:12.2px;line-height:12.2px;font:8.15px 'Liberation Mono', monospace;color:#6c6c6c">26</div>
<div style="position:absolute;left:169px;width:20.6px;text-align:right;top:424.0px;height:12.2px;line-height:12.2px;font:8.15px 'Liberation Mono', monospace;color:#6c6c6c">27</div>
<div style="position:absolute;left:157px;top:433px;width:471px;height:192px;background:#171717;border-radius:0px;box-sizing:border-box;"></div>
<div style="position:absolute;left:157px;top:433px;width:471px;height:1px;background:#202020;border-radius:0px;box-sizing:border-box;"></div>
<div style="position:absolute;left:170.00px;top:440.90px;font-family:'Liberation Sans', sans-serif;font-weight:400;font-size:8.736px;line-height:8.736px;color:#8a8a8a;white-space:pre;-webkit-text-stroke:0.22px #8a8a8a;">Problems</div>
<div style="position:absolute;left:220.40px;top:440.69px;font-family:'Liberation Sans', sans-serif;font-weight:400;font-size:8.994px;line-height:8.994px;color:#8a8a8a;white-space:pre;-webkit-text-stroke:0.22px #8a8a8a;">Output</div>
<div style="position:absolute;left:261.50px;top:441.02px;font-family:'Liberation Sans', sans-serif;font-weight:400;font-size:8.602px;line-height:8.602px;color:#8a8a8a;white-space:pre;-webkit-text-stroke:0.22px #8a8a8a;">Debug Console</div>
<div style="position:absolute;left:329.4px;top:437.5px;width:43.400000000000034px;height:14.800000000000011px;background:#262626;border-radius:3px;box-sizing:border-box;"></div>
<div style="position:absolute;left:334.80px;top:440.86px;font-family:'Liberation Sans', sans-serif;font-weight:400;font-size:8.786px;line-height:8.786px;color:#d8d8d8;white-space:pre;-webkit-text-stroke:0.22px #d8d8d8;">Terminal</div>
<div style="position:absolute;left:383.5px;top:444.6px;width:1.3px;height:1.3px;border-radius:50%;background:#8a8a8a"></div>
<div style="position:absolute;left:386.1px;top:444.6px;width:1.3px;height:1.3px;border-radius:50%;background:#8a8a8a"></div>
<div style="position:absolute;left:388.7px;top:444.6px;width:1.3px;height:1.3px;border-radius:50%;background:#8a8a8a"></div>
<svg style="position:absolute;left:421px;top:441px;" width="10" height="9" viewBox="0 0 10 9" fill="none"><rect x="0.5" y="0.5" width="9" height="8" rx="1.3" stroke="#bdbdbd" stroke-width="0.9"/><path d="M2.3 2.5L4 4.2L2.3 5.9" stroke="#bdbdbd" stroke-width="0.8"/></svg>
<div style="position:absolute;left:434.00px;top:442.31px;font-family:'Liberation Sans', sans-serif;font-weight:400;font-size:8.145px;line-height:8.145px;color:#c8c8c8;white-space:pre;-webkit-text-stroke:0.22px #c8c8c8;">zsh - image-gallery</div>
<svg style="position:absolute;left:511.5px;top:440.5px;" width="10" height="10" viewBox="0 0 10 10" fill="none"><path d="M5 0.5V9.5M0.5 5H9.5" stroke="#c8c8c8" stroke-width="1"/></svg>
<svg style="position:absolute;left:525px;top:444px;" width="4" height="3" viewBox="0 0 4 3" fill="none"><path d="M0.3 0.5L2 2.3L3.7 0.5" stroke="#a8a8a8" stroke-width="0.8"/></svg>
<svg style="position:absolute;left:539.5px;top:440.5px;" width="11" height="10" viewBox="0 0 11 10" fill="none"><rect x="0.5" y="0.5" width="10" height="9" rx="2" stroke="#c0c0c0" stroke-width="0.9"/><path d="M5.5 0.5V9.5" stroke="#c0c0c0" stroke-width="0.9"/></svg>
<svg style="position:absolute;left:559px;top:440px;" width="9" height="11" viewBox="0 0 9 11" fill="none"><path d="M0.5 2.5H8.5M3 2.5V1H6V2.5M1.5 2.5L2 10H7L7.5 2.5" stroke="#bdbdbd" stroke-width="0.9"/><path d="M3.6 4V8.5M5.4 4V8.5" stroke="#bdbdbd" stroke-width="0.7"/></svg>
<div style="position:absolute;left:578.7px;top:444.5px;width:1.6px;height:1.6px;border-radius:50%;background:#c8c8c8"></div>
<div style="position:absolute;left:581.7px;top:444.5px;width:1.6px;height:1.6px;border-radius:50%;background:#c8c8c8"></div>
<div style="position:absolute;left:584.7px;top:444.5px;width:1.6px;height:1.6px;border-radius:50%;background:#c8c8c8"></div>
<svg style="position:absolute;left:596px;top:443px;" width="6.5" height="4" viewBox="0 0 6.5 4" fill="none"><path d="M0.5 3.5L3.2 0.8L6 3.5" stroke="#c8c8c8" stroke-width="0.9"/></svg>
<svg style="position:absolute;left:611px;top:442px;" width="7" height="7" viewBox="0 0 7 7" fill="none"><path d="M0.6 0.6L6.4 6.4M6.4 0.6L0.6 6.4" stroke="#c8c8c8" stroke-width="0.9"/></svg>
<svg style="position:absolute;left:160.5px;top:458px;" width="6" height="6" viewBox="0 0 6 6" fill="none"><circle cx="3" cy="3" r="2.4" stroke="#606060" stroke-width="0.9"/></svg>
<svg style="position:absolute;left:169.8px;top:458.6px;" width="5.4" height="5" viewBox="0 0 5.4 5" fill="none"><path d="M0.3 2.5H3.6M2.6 0.6L4.9 2.5L2.6 4.4Z" stroke="#6cbd88" stroke-width="1" fill="#6cbd88" stroke-linejoin="round"/></svg>
<div style="position:absolute;left:184.20px;top:457.73px;font-family:'Liberation Mono', monospace;font-weight:700;font-size:7.915px;line-height:7.915px;color:#6cbd88;white-space:pre;-webkit-text-stroke:0.15px #6cbd88;">09:46:08</div>
<div style="position:absolute;left:227.60px;top:457.86px;font-family:'Liberation Mono', monospace;font-weight:400;font-size:7.755px;line-height:7.755px;color:#d0d0d0;white-space:pre;-webkit-text-stroke:0.15px #d0d0d0;">[hoangnguyen]</div>
<div style="position:absolute;left:293.50px;top:457.76px;font-family:'Liberation Mono', monospace;font-weight:700;font-size:7.883px;line-height:7.883px;color:#7fb2d2;white-space:pre;-webkit-text-stroke:0.15px #7fb2d2;">image-gallery</div>
<div style="position:absolute;left:359.70px;top:458.27px;font-family:'Liberation Mono', monospace;font-weight:700;font-size:7.221px;line-height:7.221px;color:#7fb2d2;white-space:pre;-webkit-text-stroke:0.15px #7fb2d2;">(main)</div>
<svg style="position:absolute;left:392.2px;top:457.8px;" width="5.2" height="6.2" viewBox="0 0 5.2 6.2" fill="none"><path d="M0.8 1.2C1.8 2.5 3 4 4.4 5.6M4.6 0.6C3.4 2.2 2 4 0.6 5.8" stroke="#e0b050" stroke-width="0.95" stroke-linecap="round"/></svg>
<div style="position:absolute;left:420.7px;top:456px;width:6.0px;height:10px;background:#d8d8d8;border-radius:0px;box-sizing:border-box;"></div>
<svg style="position:absolute;left:349.6px;top:614.2px;" width="6" height="6" viewBox="0 0 6 6" fill="none"><path d="M2 2H4V4H2Z M2 2V1.1A0.9 0.9 0 1 0 1.1 2H2 M4 2V1.1A0.9 0.9 0 1 1 4.9 2H4 M2 4V4.9A0.9 0.9 0 1 1 1.1 4H2 M4 4V4.9A0.9 0.9 0 1 0 4.9 4H4" stroke="#6a6a6a" stroke-width="0.7"/></svg>
<div style="position:absolute;left:356.20px;top:613.81px;font-family:'Liberation Sans', sans-serif;font-weight:400;font-size:7.308px;line-height:7.308px;color:#6a6a6a;white-space:pre;-webkit-text-stroke:0.22px #6a6a6a;">K to generate command</div>
<div style="position:absolute;left:628px;top:24px;width:396px;height:601px;background:#171717;border-radius:0px;box-sizing:border-box;"></div>
<div style="position:absolute;left:627px;top:24px;width:1px;height:601px;background:#232323;border-radius:0px;box-sizing:border-box;"></div>
<div style="position:absolute;left:636px;top:28.2px;width:167px;height:14.8px;background:#262626;border-radius:4px;box-sizing:border-box;"></div>
<div style="position:absolute;left:640.20px;top:32.44px;font-family:'Liberation Sans', sans-serif;font-weight:400;font-size:8.694px;line-height:8.694px;color:#dadada;white-space:pre;-webkit-text-stroke:0.22px #dadada;">Generate a responsive image gallery app</div>
<svg style="position:absolute;left:971.3px;top:31.5px;" width="8" height="8" viewBox="0 0 8 8" fill="none"><path d="M4 0V8M0 4H8" stroke="#b0b0b0" stroke-width="0.9"/></svg>
<svg style="position:absolute;left:987.8px;top:30.7px;" width="9.5" height="9.5" viewBox="0 0 9.5 9.5" fill="none"><circle cx="4.75" cy="4.75" r="4.2" stroke="#b0b0b0" stroke-width="0.9"/><path d="M4.4 2.4V4.9L6.3 6.3" stroke="#b0b0b0" stroke-width="0.9"/></svg>
<div style="position:absolute;left:1006.8px;top:35.2px;width:1.6px;height:1.6px;border-radius:50%;background:#b0b0b0"></div>
<div style="position:absolute;left:1009.6999999999999px;top:35.2px;width:1.6px;height:1.6px;border-radius:50%;background:#b0b0b0"></div>
<div style="position:absolute;left:1012.5999999999999px;top:35.2px;width:1.6px;height:1.6px;border-radius:50%;background:#b0b0b0"></div>
<div style="position:absolute;left:634.2px;top:47.3px;width:382.5999999999999px;height:23.700000000000003px;background:#1c1c1c;border:1px solid #2e2e2e;border-radius:7px;box-sizing:border-box;"></div>
<div style="position:absolute;left:640.6px;top:53.2px;width:61.39999999999998px;height:11.799999999999997px;background:#433523;border-radius:2.5px;box-sizing:border-box;"></div>
<div style="position:absolute;left:642.50px;top:55.21px;font-family:'Liberation Sans', sans-serif;font-weight:400;font-size:9.444px;line-height:9.444px;color:#e0d2bc;white-space:pre;-webkit-text-stroke:0.22px #e0d2bc;">/execute-plan</div>
<svg style="position:absolute;left:1000.5px;top:55.3px;" width="8" height="8" viewBox="0 0 8 8" fill="none"><path d="M2.5 0.8L0.7 2.8L2.5 4.8" stroke="#8a8a8a" stroke-width="0.9"/><path d="M0.8 2.8H5C6.5 2.8 7.4 3.9 7.4 5.1C7.4 6.4 6.4 7.4 5 7.4H3" stroke="#8a8a8a" stroke-width="0.9"/></svg>
<div style="position:absolute;left:640.3px;top:76.8px;width:371.70000000000005px;height:91.8px;background:#181818;border:1px solid #232323;border-radius:6px;box-sizing:border-box;"></div>
<div style="position:absolute;left:641.7px;top:95.8px;width:369.0999999999999px;height:1.2000000000000028px;background:#202020;border-radius:0px;box-sizing:border-box;"></div>
<div style="position:absolute;left:647.3px;top:97.1px;width:364.0px;height:60.5px;background:#233429;border-radius:0px;box-sizing:border-box;"></div>
<svg style="position:absolute;left:645.8px;top:82.0px;" width="9" height="9" viewBox="0 0 9 9" fill="none"><g stroke="#4f91b3" stroke-width="0.55"><ellipse cx="4.5" cy="4.5" rx="4.1" ry="1.7"/><ellipse cx="4.5" cy="4.5" rx="4.1" ry="1.7" transform="rotate(60 4.5 4.5)"/><ellipse cx="4.5" cy="4.5" rx="4.1" ry="1.7" transform="rotate(120 4.5 4.5)"/></g><circle cx="4.5" cy="4.5" r="0.7" fill="#4f91b3"/></svg>
<div style="position:absolute;left:659.50px;top:82.86px;font-family:'Liberation Sans', sans-serif;font-weight:400;font-size:8.440px;line-height:8.440px;color:#8a8a8a;white-space:pre;-webkit-text-stroke:0.22px #8a8a8a;">ImageGallery.jsx</div>
<div style="position:absolute;left:726.03px;top:82.68px;font-family:'Liberation Sans', sans-serif;font-size:9px;line-height:9px;white-space:pre"><span style="color:#6cb585">+5</span> <span style="color:#e05561">-1</span></div>
<div style="position:absolute;left:647.7px;top:99.1px;height:12px;line-height:12px;font:8.15px 'Liberation Mono', monospace;color:#e2e2e2;white-space:pre;-webkit-text-stroke:0.15px #e2e2e2">// Placeholder for ImageGallery component</div>
<div style="position:absolute;left:647.7px;top:111.1px;height:12px;line-height:12px;font:8.15px 'Liberation Mono', monospace;color:#e2e2e2;white-space:pre;-webkit-text-stroke:0.15px #e2e2e2">export default function ImageGallery() {</div>
<div style="position:absolute;left:647.7px;top:123.1px;height:12px;line-height:12px;font:8.15px 'Liberation Mono', monospace;color:#e2e2e2;white-space:pre;-webkit-text-stroke:0.15px #e2e2e2">  return null;</div>
<div style="position:absolute;left:647.7px;top:135.1px;height:12px;line-height:12px;font:8.15px 'Liberation Mono', monospace;color:#e2e2e2;white-space:pre;-webkit-text-stroke:0.15px #e2e2e2">}</div>
<svg style="position:absolute;left:822.8px;top:161.5px;" width="6" height="4" viewBox="0 0 6 4" fill="none"><path d="M0.5 0.6L3 3.2L5.5 0.6" stroke="#8a8a8a" stroke-width="0.9"/></svg>
<div style="position:absolute;left:640.3px;top:175.0px;width:371.70000000000005px;height:91.80000000000001px;background:#181818;border:1px solid #232323;border-radius:6px;box-sizing:border-box;"></div>
<div style="position:absolute;left:641.7px;top:194.0px;width:369.0999999999999px;height:1.1999999999999886px;background:#202020;border-radius:0px;box-sizing:border-box;"></div>
<div style="position:absolute;left:647.3px;top:195.3px;width:364.0px;height:60.5px;background:#233429;border-radius:0px;box-sizing:border-box;"></div>
<svg style="position:absolute;left:645.8px;top:180.2px;" width="9" height="9" viewBox="0 0 9 9" fill="none"><g stroke="#4f91b3" stroke-width="0.55"><ellipse cx="4.5" cy="4.5" rx="4.1" ry="1.7"/><ellipse cx="4.5" cy="4.5" rx="4.1" ry="1.7" transform="rotate(60 4.5 4.5)"/><ellipse cx="4.5" cy="4.5" rx="4.1" ry="1.7" transform="rotate(120 4.5 4.5)"/></g><circle cx="4.5" cy="4.5" r="0.7" fill="#4f91b3"/></svg>
<div style="position:absolute;left:659.50px;top:181.06px;font-family:'Liberation Sans', sans-serif;font-weight:400;font-size:8.440px;line-height:8.440px;color:#8a8a8a;white-space:pre;-webkit-text-stroke:0.22px #8a8a8a;">ImageGrid.jsx</div>
<div style="position:absolute;left:715.86px;top:180.88px;font-family:'Liberation Sans', sans-serif;font-size:9px;line-height:9px;white-space:pre"><span style="color:#6cb585">+5</span> <span style="color:#e05561">-1</span></div>
<div style="position:absolute;left:647.7px;top:197.3px;height:12px;line-height:12px;font:8.15px 'Liberation Mono', monospace;color:#e2e2e2;white-space:pre;-webkit-text-stroke:0.15px #e2e2e2">// Placeholder for ImageGrid component</div>
<div style="position:absolute;left:647.7px;top:209.3px;height:12px;line-height:12px;font:8.15px 'Liberation Mono', monospace;color:#e2e2e2;white-space:pre;-webkit-text-stroke:0.15px #e2e2e2">export default function ImageGrid() {</div>
<div style="position:absolute;left:647.7px;top:221.3px;height:12px;line-height:12px;font:8.15px 'Liberation Mono', monospace;color:#e2e2e2;white-space:pre;-webkit-text-stroke:0.15px #e2e2e2">  return null;</div>
<div style="position:absolute;left:647.7px;top:233.3px;height:12px;line-height:12px;font:8.15px 'Liberation Mono', monospace;color:#e2e2e2;white-space:pre;-webkit-text-stroke:0.15px #e2e2e2">}</div>
<svg style="position:absolute;left:822.8px;top:259.7px;" width="6" height="4" viewBox="0 0 6 4" fill="none"><path d="M0.5 0.6L3 3.2L5.5 0.6" stroke="#8a8a8a" stroke-width="0.9"/></svg>
<div style="position:absolute;left:640.3px;top:273.2px;width:371.70000000000005px;height:91.80000000000001px;background:#181818;border:1px solid #232323;border-radius:6px;box-sizing:border-box;"></div>
<div style="position:absolute;left:641.7px;top:292.2px;width:369.0999999999999px;height:1.1999999999999886px;background:#202020;border-radius:0px;box-sizing:border-box;"></div>
<div style="position:absolute;left:647.3px;top:293.5px;width:364.0px;height:60.5px;background:#233429;border-radius:0px;box-sizing:border-box;"></div>
<svg style="position:absolute;left:645.8px;top:278.4px;" width="9" height="9" viewBox="0 0 9 9" fill="none"><g stroke="#4f91b3" stroke-width="0.55"><ellipse cx="4.5" cy="4.5" rx="4.1" ry="1.7"/><ellipse cx="4.5" cy="4.5" rx="4.1" ry="1.7" transform="rotate(60 4.5 4.5)"/><ellipse cx="4.5" cy="4.5" rx="4.1" ry="1.7" transform="rotate(120 4.5 4.5)"/></g><circle cx="4.5" cy="4.5" r="0.7" fill="#4f91b3"/></svg>
<div style="position:absolute;left:659.50px;top:279.26px;font-family:'Liberation Sans', sans-serif;font-weight:400;font-size:8.440px;line-height:8.440px;color:#8a8a8a;white-space:pre;-webkit-text-stroke:0.22px #8a8a8a;">ImageCard.jsx</div>
<div style="position:absolute;left:718.21px;top:279.08px;font-family:'Liberation Sans', sans-serif;font-size:9px;line-height:9px;white-space:pre"><span style="color:#6cb585">+5</span> <span style="color:#e05561">-1</span></div>
<div style="position:absolute;left:647.7px;top:295.5px;height:12px;line-height:12px;font:8.15px 'Liberation Mono', monospace;color:#e2e2e2;white-space:pre;-webkit-text-stroke:0.15px #e2e2e2">// Placeholder for ImageCard component</div>
<div style="position:absolute;left:647.7px;top:307.5px;height:12px;line-height:12px;font:8.15px 'Liberation Mono', monospace;color:#e2e2e2;white-space:pre;-webkit-text-stroke:0.15px #e2e2e2">export default function ImageCard() {</div>
<div style="position:absolute;left:647.7px;top:319.5px;height:12px;line-height:12px;font:8.15px 'Liberation Mono', monospace;color:#e2e2e2;white-space:pre;-webkit-text-stroke:0.15px #e2e2e2">  return null;</div>
<div style="position:absolute;left:647.7px;top:331.5px;height:12px;line-height:12px;font:8.15px 'Liberation Mono', monospace;color:#e2e2e2;white-space:pre;-webkit-text-stroke:0.15px #e2e2e2">}</div>
<svg style="position:absolute;left:822.8px;top:357.9px;" width="6" height="4" viewBox="0 0 6 4" fill="none"><path d="M0.5 0.6L3 3.2L5.5 0.6" stroke="#8a8a8a" stroke-width="0.9"/></svg>
<div style="position:absolute;left:640.3px;top:371.40000000000003px;width:371.70000000000005px;height:91.80000000000001px;background:#181818;border:1px solid #232323;border-radius:6px;box-sizing:border-box;"></div>
<div style="position:absolute;left:641.7px;top:390.40000000000003px;width:369.0999999999999px;height:1.1999999999999886px;background:#202020;border-radius:0px;box-sizing:border-box;"></div>
<div style="position:absolute;left:647.3px;top:391.70000000000005px;width:364.0px;height:60.5px;background:#233429;border-radius:0px;box-sizing:border-box;"></div>
<svg style="position:absolute;left:645.8px;top:376.6px;" width="9" height="9" viewBox="0 0 9 9" fill="none"><g stroke="#4f91b3" stroke-width="0.55"><ellipse cx="4.5" cy="4.5" rx="4.1" ry="1.7"/><ellipse cx="4.5" cy="4.5" rx="4.1" ry="1.7" transform="rotate(60 4.5 4.5)"/><ellipse cx="4.5" cy="4.5" rx="4.1" ry="1.7" transform="rotate(120 4.5 4.5)"/></g><circle cx="4.5" cy="4.5" r="0.7" fill="#4f91b3"/></svg>
<div style="position:absolute;left:659.50px;top:377.46px;font-family:'Liberation Sans', sans-serif;font-weight:400;font-size:8.440px;line-height:8.440px;color:#8a8a8a;white-space:pre;-webkit-text-stroke:0.22px #8a8a8a;">ImageModal.jsx</div>
<div style="position:absolute;left:722.91px;top:377.28px;font-family:'Liberation Sans', sans-serif;font-size:9px;line-height:9px;white-space:pre"><span style="color:#6cb585">+5</span> <span style="color:#e05561">-1</span></div>
<div style="position:absolute;left:647.7px;top:393.70000000000005px;height:12px;line-height:12px;font:8.15px 'Liberation Mono', monospace;color:#e2e2e2;white-space:pre;-webkit-text-stroke:0.15px #e2e2e2">// Placeholder for ImageModal component</div>
<div style="position:absolute;left:647.7px;top:405.70000000000005px;height:12px;line-height:12px;font:8.15px 'Liberation Mono', monospace;color:#e2e2e2;white-space:pre;-webkit-text-stroke:0.15px #e2e2e2">export default function ImageModal() {</div>
<div style="position:absolute;left:647.7px;top:417.70000000000005px;height:12px;line-height:12px;font:8.15px 'Liberation Mono', monospace;color:#e2e2e2;white-space:pre;-webkit-text-stroke:0.15px #e2e2e2">  return null;</div>
<div style="position:absolute;left:647.7px;top:429.70000000000005px;height:12px;line-height:12px;font:8.15px 'Liberation Mono', monospace;color:#e2e2e2;white-space:pre;-webkit-text-stroke:0.15px #e2e2e2">}</div>
<svg style="position:absolute;left:822.8px;top:456.1px;" width="6" height="4" viewBox="0 0 6 4" fill="none"><path d="M0.5 0.6L3 3.2L5.5 0.6" stroke="#8a8a8a" stroke-width="0.9"/></svg>
<div style="position:absolute;left:640.3px;top:469.6px;width:371.70000000000005px;height:91.79999999999995px;background:#181818;border:1px solid #232323;border-radius:6px;box-sizing:border-box;"></div>
<div style="position:absolute;left:641.7px;top:488.6px;width:369.0999999999999px;height:1.1999999999999886px;background:#202020;border-radius:0px;box-sizing:border-box;"></div>
<div style="position:absolute;left:647.3px;top:489.90000000000003px;width:364.0px;height:60.49999999999994px;background:#233429;border-radius:0px;box-sizing:border-box;"></div>
<svg style="position:absolute;left:645.8px;top:474.8px;" width="9" height="9" viewBox="0 0 9 9" fill="none"><g stroke="#4f91b3" stroke-width="0.55"><ellipse cx="4.5" cy="4.5" rx="4.1" ry="1.7"/><ellipse cx="4.5" cy="4.5" rx="4.1" ry="1.7" transform="rotate(60 4.5 4.5)"/><ellipse cx="4.5" cy="4.5" rx="4.1" ry="1.7" transform="rotate(120 4.5 4.5)"/></g><circle cx="4.5" cy="4.5" r="0.7" fill="#4f91b3"/></svg>
<div style="position:absolute;left:659.50px;top:475.66px;font-family:'Liberation Sans', sans-serif;font-weight:400;font-size:8.440px;line-height:8.440px;color:#8a8a8a;white-space:pre;-webkit-text-stroke:0.22px #8a8a8a;">ImageDetail.jsx</div>
<div style="position:absolute;left:721.50px;top:475.48px;font-family:'Liberation Sans', sans-serif;font-size:9px;line-height:9px;white-space:pre"><span style="color:#6cb585">+5</span> <span style="color:#e05561">-1</span></div>
<div style="position:absolute;left:647.7px;top:491.90000000000003px;height:12px;line-height:12px;font:8.15px 'Liberation Mono', monospace;color:#e2e2e2;white-space:pre;-webkit-text-stroke:0.15px #e2e2e2">// Placeholder for ImageDetail component</div>
<div style="position:absolute;left:647.7px;top:503.90000000000003px;height:12px;line-height:12px;font:8.15px 'Liberation Mono', monospace;color:#e2e2e2;white-space:pre;-webkit-text-stroke:0.15px #e2e2e2">export default function ImageDetail() {</div>
<div style="position:absolute;left:647.7px;top:515.9000000000001px;height:12px;line-height:12px;font:8.15px 'Liberation Mono', monospace;color:#e2e2e2;white-space:pre;-webkit-text-stroke:0.15px #e2e2e2">  return null;</div>
<div style="position:absolute;left:647.7px;top:527.9000000000001px;height:12px;line-height:12px;font:8.15px 'Liberation Mono', monospace;color:#e2e2e2;white-space:pre;-webkit-text-stroke:0.15px #e2e2e2">}</div>
<svg style="position:absolute;left:822.8px;top:554.3000000000001px;" width="6" height="4" viewBox="0 0 6 4" fill="none"><path d="M0.5 0.6L3 3.2L5.5 0.6" stroke="#8a8a8a" stroke-width="0.9"/></svg>
<div style="position:absolute;left:641px;top:553px;width:370.29999999999995px;height:47px;background:#1c1c1c;border:1px solid #2c2c2c;border-radius:6px;box-sizing:border-box;"></div>
<svg style="position:absolute;left:648px;top:560px;" width="6" height="6" viewBox="0 0 6 6" fill="none"><path d="M0.7 5.3L5.2 0.8M1.8 0.8H5.2V4.2" stroke="#9a9a9a" stroke-width="0.9"/></svg>
<div style="position:absolute;left:659.30px;top:560.15px;font-family:'Liberation Sans', sans-serif;font-weight:400;font-size:8.325px;line-height:8.325px;color:#7e7e7e;white-space:pre;-webkit-text-stroke:0.22px #7e7e7e;">Review All</div>
<div style="position:absolute;left:634.7px;top:571.7px;width:382.29999999999995px;height:46.5px;background:#1c1c1c;border:1px solid #303030;border-radius:8px;box-sizing:border-box;"></div>
<div style="position:absolute;left:641.00px;top:578.75px;font-family:'Liberation Sans', sans-serif;font-weight:400;font-size:9.157px;line-height:9.157px;color:#5a5a5a;white-space:pre;-webkit-text-stroke:0.22px #5a5a5a;">Plan, @ for context, / for commands</div>
<div style="position:absolute;left:641px;top:598.8px;width:54.60000000000002px;height:13.600000000000023px;background:#292929;border-radius:7px;box-sizing:border-box;"></div>
<svg style="position:absolute;left:646.5px;top:603px;" width="10.5" height="5" viewBox="0 0 10.5 5" fill="none"><path d="M5.25 2.5C4 0.6 1 0.3 1 2.5C1 4.7 4 4.4 5.25 2.5C6.5 0.6 9.5 0.3 9.5 2.5C9.5 4.7 6.5 4.4 5.25 2.5Z" stroke="#9a9a9a" stroke-width="0.8"/></svg>
<div style="position:absolute;left:660.00px;top:602.47px;font-family:'Liberation Sans', sans-serif;font-weight:400;font-size:8.419px;line-height:8.419px;color:#cfcfcf;white-space:pre;-webkit-text-stroke:0.22px #cfcfcf;">Agent</div>
<svg style="position:absolute;left:686.3px;top:604.5px;" width="4.5" height="3" viewBox="0 0 4.5 3" fill="none"><path d="M0.3 0.4L2.25 2.4L4.2 0.4" stroke="#9a9a9a" stroke-width="0.8"/></svg>
<div style="position:absolute;left:701.50px;top:602.61px;font-family:'Liberation Sans', sans-serif;font-weight:400;font-size:8.262px;line-height:8.262px;color:#bdbdbd;white-space:pre;-webkit-text-stroke:0.22px #bdbdbd;">Composer 1</div>
<svg style="position:absolute;left:750.4px;top:604.5px;" width="5" height="3" viewBox="0 0 5 3" fill="none"><path d="M0.4 0.4L2.5 2.5L4.6 0.4" stroke="#9a9a9a" stroke-width="0.8"/></svg>
<svg style="position:absolute;left:947.8px;top:600.8px;" width="9.5" height="9.5" viewBox="0 0 9.5 9.5" fill="none"><circle cx="4.75" cy="4.75" r="3.9" stroke="#bdbdbd" stroke-width="1.15" stroke-dasharray="22.5 2" transform="rotate(-80 4.75 4.75)"/></svg>
<svg style="position:absolute;left:963.8px;top:601.2px;" width="9.6" height="9.6" viewBox="0 0 9.6 9.6" fill="none"><path d="M6.3 4.8C6.3 5.9 5.6 6.6 4.7 6.6C3.8 6.6 3.2 5.9 3.2 4.9C3.2 3.8 3.9 3.1 4.8 3.1C5.6 3.1 6.3 3.8 6.3 4.8ZM6.3 3.2V5.6C6.3 6.4 6.8 6.8 7.4 6.8C8.3 6.8 8.9 6 8.9 4.7C8.9 2.3 7.1 0.5 4.8 0.5C2.4 0.5 0.5 2.4 0.5 4.8C0.5 7.2 2.4 9.1 4.8 9.1C5.7 9.1 6.5 8.9 7.1 8.5" stroke="#8e8e8e" stroke-width="0.85"/></svg>
<svg style="position:absolute;left:980.8px;top:601.5px;" width="9.5" height="8" viewBox="0 0 9.5 8" fill="none"><rect x="0.4" y="0.4" width="8.7" height="7.2" fill="#9a9a9a"/><rect x="1.3" y="1.3" width="6.9" height="4" fill="#1c1c1c"/><path d="M1.3 6L3.5 3.2L5 4.6L6.3 3.6L8.2 5.6" stroke="#9a9a9a" stroke-width="0.8"/></svg>
<div style="position:absolute;left:997.7px;top:598.8px;width:13.5px;height:13.5px;border-radius:50%;background:#a8a8a8"></div>
<svg style="position:absolute;left:1001.5px;top:601px;" width="6" height="9.5" viewBox="0 0 6 9.5" fill="none"><rect x="1.8" y="0.5" width="2.4" height="5" rx="1.2" fill="#2a2a2a"/><path d="M0.7 3.8C0.7 6 1.8 7 3 7C4.2 7 5.3 6 5.3 3.8M3 7V9M1.5 9H4.5" stroke="#2a2a2a" stroke-width="0.8"/></svg>
<div style="position:absolute;left:0px;top:625px;width:1024px;height:15px;background:#161616;border-radius:0px;box-sizing:border-box;"></div>
<div style="position:absolute;left:0px;top:625px;width:1024px;height:1px;background:#212121;border-radius:0px;box-sizing:border-box;"></div>
<svg style="position:absolute;left:8.5px;top:629.5px;" width="7" height="7.5" viewBox="0 0 7 7.5" fill="none"><path d="M6.5 0.4L0.5 7M6.6 1.6L3.6 3.6L6.6 5.5" stroke="#7e7e7e" stroke-width="0.85"/></svg>
<svg style="position:absolute;left:27.6px;top:628.8px;" width="8" height="8.6" viewBox="0 0 8 8.6" fill="none"><circle cx="1.7" cy="7" r="1.15" stroke="#7e7e7e" stroke-width="0.8"/><circle cx="6.6" cy="1.8" r="1.15" stroke="#7e7e7e" stroke-width="0.8"/><path d="M1.7 0.2V5.8M6.6 3C6.6 5.6 2.3 4.7 2.1 6.1" stroke="#7e7e7e" stroke-width="0.8"/></svg>
<div style="position:absolute;left:38.75px;top:628.70px;font-family:'Liberation Sans', sans-serif;font-weight:400;font-size:8.390px;line-height:8.390px;color:#8e8e8e;white-space:pre;-webkit-text-stroke:0.22px #8e8e8e;">main*</div>
<svg style="position:absolute;left:65.6px;top:629px;" width="8.8" height="7.6" viewBox="0 0 8.8 7.6" fill="none"><path d="M2.4 6H1.9C1 6 0.4 5.2 0.4 4.4C0.4 3.5 1.1 2.9 1.9 2.9C2.1 1.5 3.1 0.5 4.4 0.5C5.8 0.5 6.8 1.5 7 2.9C7.8 2.9 8.4 3.5 8.4 4.4C8.4 5.2 7.8 6 6.9 6H6.4M4.4 3.4V7.4M3.3 4.5L4.4 3.4L5.5 4.5" stroke="#7e7e7e" stroke-width="0.8"/></svg>
<svg style="position:absolute;left:84.6px;top:628.6px;" width="8.4" height="9" viewBox="0 0 8.4 9" fill="none"><circle cx="2" cy="1.5" r="1.1" stroke="#7e7e7e" stroke-width="0.8"/><circle cx="6.3" cy="7.4" r="1.1" stroke="#7e7e7e" stroke-width="0.8"/><path d="M2 2.6V8.8M6.3 0.2V6.3M2 4.4L6.3 4.8M2 6.2L4 7.6" stroke="#7e7e7e" stroke-width="0.8"/></svg>
<svg style="position:absolute;left:104.6px;top:628.6px;" width="8.4" height="8.4" viewBox="0 0 8.4 8.4" fill="none"><path d="M3.1 4.2L4.3 5.4L7.7 2C7.9 1.2 7.9 0.5 7.9 0.5C7.9 0.5 7.2 0.5 6.4 0.7Z M2.6 5.8L0.6 7.8M2.3 3.6H0.9L2.4 2.1H4.1M4.8 6.1V7.5L6.3 6" stroke="#7e7e7e" stroke-width="0.8" stroke-linejoin="round"/></svg>
<svg style="position:absolute;left:114.8px;top:628.8px;" width="8.2" height="8" viewBox="0 0 8.2 8" fill="none"><path d="M4.8 0.9L7.3 3.4L3.4 7.3L0.9 4.8Z M2.2 6L1 7.2" stroke="#7e7e7e" stroke-width="0.8" stroke-linejoin="round"/><path d="M4.3 3.7L5 3" stroke="#7e7e7e" stroke-width="0.8"/></svg>
<div style="position:absolute;left:125.80px;top:628.62px;font-family:'Liberation Sans', sans-serif;font-weight:400;font-size:8.486px;line-height:8.486px;color:#8e8e8e;white-space:pre;-webkit-text-stroke:0.22px #8e8e8e;">Launchpad</div>
<div style="position:absolute;left:173.2px;top:625px;width:31.80000000000001px;height:15px;background:#c47a1a;border-radius:0px;box-sizing:border-box;"></div>
<svg style="position:absolute;left:179.5px;top:627.8px;" width="9" height="9.5" viewBox="0 0 9 9.5" fill="none"><circle cx="2.2" cy="1.3" r="1" fill="#f4f4f4"/><circle cx="5.6" cy="1.3" r="1" fill="#f4f4f4"/><ellipse cx="3.9" cy="3" rx="2.6" ry="2.1" fill="#f4f4f4"/><path d="M1.8 4.5H5.2L5.6 6.2L8.2 5.6L7.8 7.3L5.4 8.2H2.6L1.6 9H0.8L1.2 6.8Z" fill="#f4f4f4"/></svg>
<svg style="position:absolute;left:188.8px;top:628.4px;" width="8.6" height="7.8" viewBox="0 0 8.6 7.8" fill="none"><path d="M4.3 0.6L8.1 7.3H0.5Z" stroke="#f4f4f4" stroke-width="0.9" stroke-linejoin="round"/><path d="M4.3 3V5.1M4.3 5.8V6.4" stroke="#f4f4f4" stroke-width="0.8"/></svg>
<svg style="position:absolute;left:210.3px;top:628.6px;" width="9" height="9" viewBox="0 0 9 9" fill="none"><circle cx="4.5" cy="4.5" r="4" stroke="#7a7a7a" stroke-width="0.8"/><path d="M3 3L6 6M6 3L3 6" stroke="#7a7a7a" stroke-width="0.8"/></svg>
<div style="position:absolute;left:221.50px;top:628.65px;font-family:'Liberation Sans', sans-serif;font-weight:400;font-size:8.449px;line-height:8.449px;color:#8e8e8e;white-space:pre;-webkit-text-stroke:0.22px #8e8e8e;">0</div>
<svg style="position:absolute;left:229.8px;top:628.6px;" width="9" height="8.4" viewBox="0 0 9 8.4" fill="none"><path d="M4.5 0.7L8.5 7.8H0.5Z" stroke="#7a7a7a" stroke-width="0.8" stroke-linejoin="round"/><path d="M4.5 3.2V5.3M4.5 6V6.7" stroke="#7a7a7a" stroke-width="0.8"/></svg>
<div style="position:absolute;left:241.30px;top:628.65px;font-family:'Liberation Sans', sans-serif;font-weight:400;font-size:8.449px;line-height:8.449px;color:#8e8e8e;white-space:pre;-webkit-text-stroke:0.22px #8e8e8e;">0</div>
<div style="position:absolute;left:256.90px;top:628.34px;font-family:'Liberation Sans', sans-serif;font-weight:400;font-size:8.811px;line-height:8.811px;color:#8e8e8e;white-space:pre;-webkit-text-stroke:0.22px #8e8e8e;">-- NORMAL --</div>
<div style="position:absolute;left:952.00px;top:628.46px;font-family:'Liberation Sans', sans-serif;font-weight:400;font-size:8.435px;line-height:8.435px;color:#8a8a8a;white-space:pre;-webkit-text-stroke:0.22px #8a8a8a;">Cursor Tab</div>
<svg style="position:absolute;left:1005px;top:627.7px;" width="8.5" height="9.5" viewBox="0 0 8.5 9.5" fill="none"><path d="M1 7V4.2C1 2.3 2.5 0.9 4.25 0.9C6 0.9 7.5 2.3 7.5 4.2V7L8.2 7.8H0.3Z" stroke="#9a9a9a" stroke-width="0.8"/><path d="M3.2 8.6C3.5 9.1 5 9.1 5.3 8.6" stroke="#9a9a9a" stroke-width="0.8"/></svg>
</body></html>
